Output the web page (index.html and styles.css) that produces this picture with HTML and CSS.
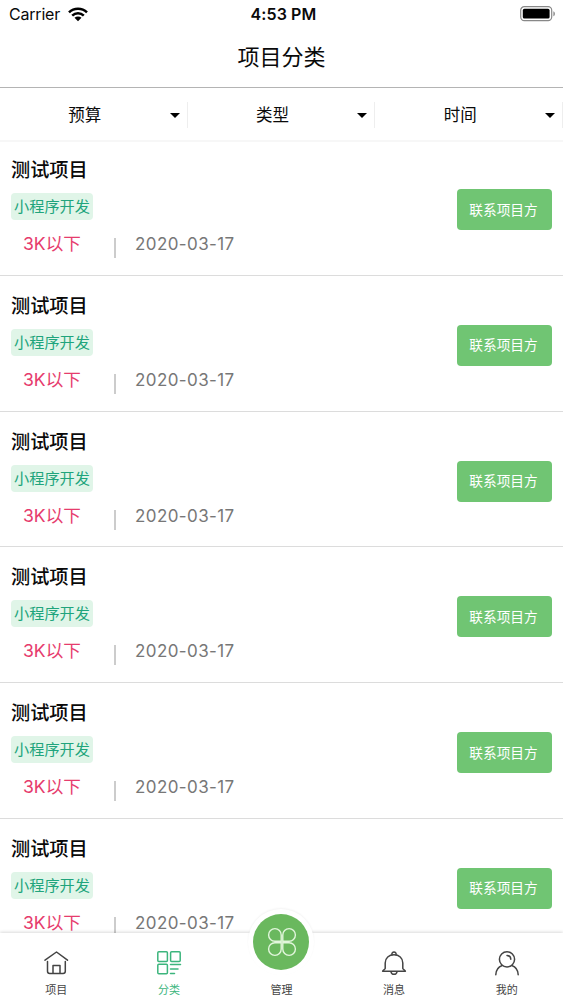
FILE: index.html
```
<!DOCTYPE html>
<html lang="zh-CN">
  <head>
    <meta charset="UTF-8" />
    <meta name="viewport" content="width=device-width, initial-scale=1.0" />
    <title>项目分类</title>
    <link rel="stylesheet" href="styles.css">
  </head>
  <body>
    <div class="app">
      <div class="status-bar">
        <div class="carrier">
          <span>Carrier</span>
          <svg class="wifi" viewBox="0 0 20 15">
            <g fill="none" stroke="#000" stroke-width="2.5">
              <path d="M1 5.3C6 .4 14 .4 19 5.3" />
              <path d="M4.2 8.6c3.3-3.2 8.3-3.2 11.6 0" />
            </g>
            <path d="M6.5 10.8c2-1.8 5-1.8 7 0L10 14.3z" />
          </svg>
        </div>
        <div class="clock">4:53 PM</div>
        <svg class="battery" viewBox="0 0 36 16">
          <rect x=".7" y=".7" width="31" height="14" rx="3.6" fill="none" stroke="#888" stroke-width="1.2" />
          <rect x="2.8" y="2.8" width="26.8" height="9.8" rx="1.6" />
          <path d="M33.4 5.2c2 .9 2 4.2 0 5.1z" fill="#888" />
        </svg>
      </div>
      <h1 class="header">项目分类</h1>
      <div class="filter">
        <div class="filter-item"><span>预算</span><i class="arrow"></i></div>
        <div class="filter-item"><span>类型</span><i class="arrow"></i></div>
        <div class="filter-item"><span>时间</span><i class="arrow"></i></div>
      </div>

      <div class="list">
        <div class="item">
          <div class="info">
            <h2 class="title">测试项目</h2>
            <span class="tag">小程序开发</span>
            <div class="meta"><span class="price">3K以下</span><span class="date">2020-03-17</span></div>
          </div>
          <button class="contact">联系项目方</button>
        </div>
        <div class="item">
          <div class="info">
            <h2 class="title">测试项目</h2>
            <span class="tag">小程序开发</span>
            <div class="meta"><span class="price">3K以下</span><span class="date">2020-03-17</span></div>
          </div>
          <button class="contact">联系项目方</button>
        </div>
        <div class="item">
          <div class="info">
            <h2 class="title">测试项目</h2>
            <span class="tag">小程序开发</span>
            <div class="meta"><span class="price">3K以下</span><span class="date">2020-03-17</span></div>
          </div>
          <button class="contact">联系项目方</button>
        </div>
        <div class="item">
          <div class="info">
            <h2 class="title">测试项目</h2>
            <span class="tag">小程序开发</span>
            <div class="meta"><span class="price">3K以下</span><span class="date">2020-03-17</span></div>
          </div>
          <button class="contact">联系项目方</button>
        </div>
        <div class="item">
          <div class="info">
            <h2 class="title">测试项目</h2>
            <span class="tag">小程序开发</span>
            <div class="meta"><span class="price">3K以下</span><span class="date">2020-03-17</span></div>
          </div>
          <button class="contact">联系项目方</button>
        </div>
        <div class="item">
          <div class="info">
            <h2 class="title">测试项目</h2>
            <span class="tag">小程序开发</span>
            <div class="meta"><span class="price">3K以下</span><span class="date">2020-03-17</span></div>
          </div>
          <button class="contact">联系项目方</button>
        </div>
      </div>

      <div class="tabbar">
        <div class="tab">
          <svg class="icon" viewBox="0 0 26 26">
            <path d="M2 10.2L13.5 2l11 8.2M4.5 11.5v9.8c0 1.4.8 2.2 2.2 2.2h13.4c1.4 0 2.2-.8 2.2-2.2v-9.8M10 23.3v-7.8h7v7.8" />
          </svg>
          <span>项目</span>
        </div>
        <div class="tab active">
          <svg class="icon" viewBox="0 0 26 26">
            <rect x="1.8" y="1.8" width="9.6" height="9.6" rx="1" />
            <rect x="14.6" y="1.8" width="9.6" height="9.6" rx="1" />
            <rect x="1.8" y="14.2" width="9.6" height="9.6" rx="1" />
            <path d="M14.5 14.4h10M14.5 19h7.5M14.5 23.6h4" />
          </svg>
          <span>分类</span>
        </div>
        <div class="tab">
          <div class="bump">
            <div class="circle">
              <svg class="clover" viewBox="0 0 30 30">
                <path d="M14.2 14.2H8A6.3 6.3 0 1 1 14.2 8zM15.8 14.2H22A6.3 6.3 0 1 0 15.8 8zM14.2 15.8H8A6.3 6.3 0 1 0 14.2 22zM15.8 15.8H22A6.3 6.3 0 1 1 15.8 22z" />
              </svg>
            </div>
          </div>
          <span>管理</span>
        </div>
        <div class="tab">
          <svg class="icon" viewBox="0 0 26 26">
            <path d="M4.2 18.5V13C4.2 7.8 8 4.8 13 4.8s8.8 3 8.8 8.2v5.5c0 1 2.6 1.200 2.600 2.800H1.600c0-1.600 2.600-1.800 2.600-2.800z" />
            <path d="M11 4.800c-1-3.800 5-3.800 4 0M10 21.800c.6 3.300 5.400 3.300 6 0" />
          </svg>
          <span>消息</span>
        </div>
        <div class="tab">
          <svg class="icon" viewBox="0 0 26 26">
            <circle cx="13" cy="9.3" r="7.6" />
            <path d="M1.8 24.8C2 19.8 4.5 16.8 8.2 15.5M24.2 24.8C24 19.8 21.5 16.8 17.8 15.5M13 5.5c2.2 0 3.7 1.500 3.800 3.800" />
          </svg>
          <span>我的</span>
        </div>
      </div>
    </div>
  </body>
</html>
```
FILE: styles.css
```
* {
  box-sizing: border-box;
}
body {
  margin: 0;
  background: #fff;
  color: #0a0a0a;
  font-family: Inter, "Noto Sans CJK SC", sans-serif;
}
h1,
h2 {
  margin: 0;
}
.app {
  height: 1000px;
  display: flex;
  flex-direction: column;
  overflow: hidden;
}

.status-bar {
  height: 28px;
  flex: none;
  padding: 0 7px 0 9px;
  display: grid;
  grid-template-columns: 1fr auto 1fr;
  align-items: center;
  font-size: 16px;
  line-height: 28px;
}
.carrier {
  display: flex;
  align-items: center;
  gap: 8px;
  letter-spacing: -0.2px;
}
.wifi {
  width: 20px;
  height: 15px;
}
.clock {
  padding-left: 2px;
  font-weight: 600;
  letter-spacing: 0.1px;
}
.battery {
  width: 36px;
  height: 16px;
  justify-self: end;
}

.header {
  height: 60px;
  flex: none;
  border-bottom: 1px solid #b4b4b4;
  font-size: 22px;
  font-weight: 400;
  line-height: 58px;
  text-align: center;
}

.filter {
  height: 52px;
  flex: none;
  display: flex;
  align-items: center;
  padding-top: 2px;
  box-shadow: 0 2px 0 #f7f7f7;
}
.filter-item {
  flex: 1;
  height: 26px;
  padding-right: 7px;
  display: flex;
  align-items: center;
  border-right: 1px solid #eee;
  font-size: 16.5px;
}
.filter-item span {
  flex: 1;
  padding-bottom: 2px;
  text-align: center;
}
.arrow {
  border: 5px solid transparent;
  border-top-color: #000;
  border-bottom: 0;
}

.list {
  flex: 1;
  min-height: 0;
  overflow: hidden;
}
.item {
  height: 135.8px;
  padding: 17px 11px 0;
  display: flex;
  justify-content: space-between;
  border-bottom: 1px solid #dcdcdc;
}
.title {
  font-size: 19.2px;
  font-weight: 500;
  line-height: 26px;
}
.tag {
  display: block;
  width: 82px;
  height: 27px;
  margin-top: 10px;
  border-radius: 4px;
  background: #e0f5e8;
  color: #20a47c;
  font-size: 15.2px;
  line-height: 27px;
  text-align: center;
}
.meta {
  display: flex;
  margin-top: 11px;
  padding-left: 12px;
  line-height: 26px;
}
.price {
  width: 92px;
  color: #e63c6d;
  font-size: 17.6px;
}
.date {
  position: relative;
  padding-left: 20px;
  color: #777;
  font-size: 17px;
  letter-spacing: 0.4px;
}
/* divider between price and date */
.date::before {
  content: "";
  position: absolute;
  left: -1px;
  top: 7px;
  width: 2px;
  height: 20px;
  background: #ccc;
}
.contact {
  width: 95px;
  height: 41px;
  margin-top: 32px;
  padding: 0 2px 2px 0;
  border: 0;
  border-radius: 4px;
  background: #70c573;
  color: #fff;
  font-family: inherit;
  font-size: 13.7px;
}

.tabbar {
  position: relative;
  height: 67px;
  flex: none;
  display: flex;
  background: #fff;
  box-shadow: 0 -1px 3px rgba(0, 0, 0, 0.15);
}
.tab {
  flex: 1;
  display: flex;
  flex-direction: column;
  align-items: center;
  justify-content: flex-end;
  gap: 6px;
  padding-bottom: 2px;
  color: #444;
  font-size: 11px;
  line-height: 16px;
}
.active {
  color: #3cb57d;
}
.icon {
  width: 26px;
  height: 26px;
  fill: none;
  stroke: currentColor;
  stroke-width: 1.5;
  stroke-linecap: round;
  stroke-linejoin: round;
}
.bump {
  width: 66px;
  height: 66px;
  margin-bottom: 1px;
  padding: 5px;
  border-radius: 50%;
  background: #fff;
  box-shadow: 0 -1px 2px rgba(0, 0, 0, 0.05);
}
.circle {
  height: 56px;
  display: flex;
  align-items: center;
  justify-content: center;
  padding-left: 1px;
  border-radius: 50%;
  background: #6ab85e;
}
.clover {
  width: 30px;
  height: 30px;
  fill: none;
  stroke: #e2f6dc;
  stroke-width: 1.4;
}
```
